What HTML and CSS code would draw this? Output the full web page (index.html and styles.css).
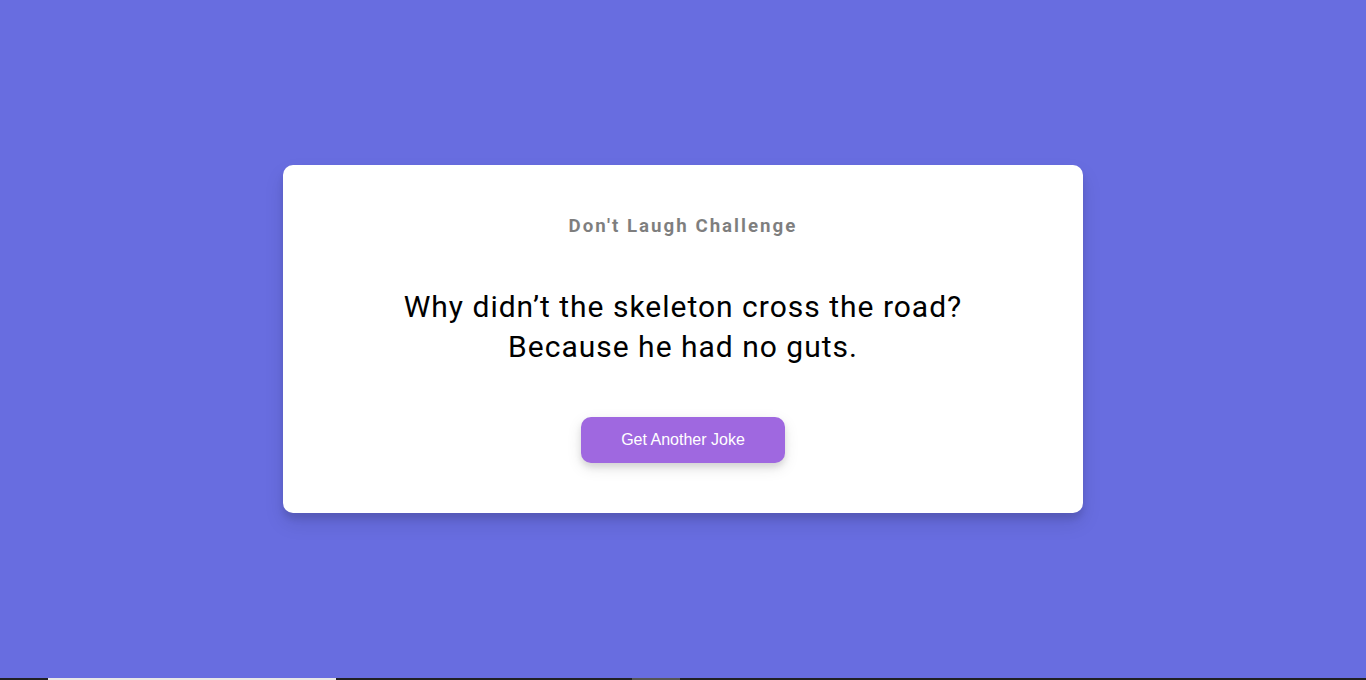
FILE: index.html
```html
<!DOCTYPE html>
<html lang="en">
<head>
<meta charset="UTF-8">
<title>Dad Jokes</title>
<link rel="stylesheet" href="styles.css">
</head>
<body>
<main class="stage">
  <div class="container">
    <h3 class="title">Don't Laugh Challenge</h3>
    <div class="joke">Why didn’t the skeleton cross the road? Because he had no guts.</div>
    <button class="btn">Get Another Joke</button>
  </div>
</main>
<div class="strip">
  <span class="seg-light"></span>
  <span class="seg-gray"></span>
</div>
</body>
</html>
```
FILE: styles.css
```css
* { box-sizing: border-box; }
html, body { margin: 0; height: 100%; }
body {
  background: #686de0;
  font-family: Roboto, "Noto Sans", sans-serif;
  display: flex;
  flex-direction: column;
}
.stage {
  flex: 1;
  display: flex;
  align-items: center;
  justify-content: center;
}
.container {
  background: #fff;
  border-radius: 10px;
  box-shadow: 0 10px 20px rgba(0, 0, 0, 0.1), 0 6px 6px rgba(0, 0, 0, 0.1);
  padding: 50px 20px;
  text-align: center;
  width: 800px;
}
.title {
  margin: 0;
  font-size: 18.72px;
  font-weight: 700;
  opacity: 0.5;
  letter-spacing: 2px;
}
.joke {
  font-size: 30px;
  letter-spacing: 1px;
  line-height: 40px;
  margin: 50px auto;
  max-width: 600px;
  color: #000;
}
.btn {
  background: #9f68e0;
  color: #fff;
  border: 0;
  border-radius: 10px;
  box-shadow: 0 5px 15px rgba(0, 0, 0, 0.1), 0 4px 6px rgba(0, 0, 0, 0.1);
  padding: 14px 40px;
  font-family: "Liberation Sans", Arial, sans-serif;
  font-size: 16px;
  cursor: pointer;
}
.strip {
  height: 2px;
  background: #202124;
  display: flex;
}
.seg-light {
  margin-left: 48px;
  width: 288px;
  background: #e8e8e8;
}
.seg-gray {
  margin-left: 296px;
  width: 48px;
  background: #555;
}
```
